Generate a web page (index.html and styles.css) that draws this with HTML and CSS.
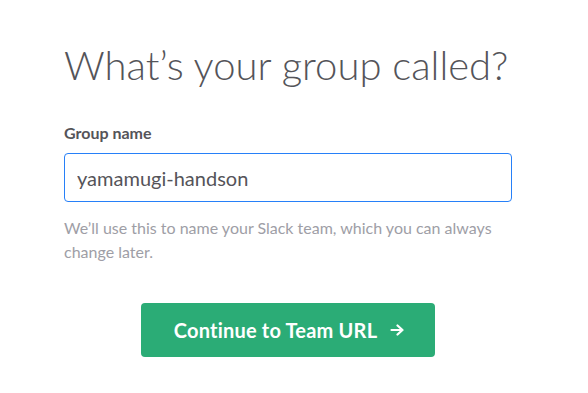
FILE: index.html
```html
<!DOCTYPE html>
<html lang="en">
<head>
    <meta charset="UTF-8">
    <title>What's your group called?</title>
    <link rel="stylesheet" href="styles.css">
</head>
<body>
<!-- group name step -->
<main class="step">
    <h1 class="step-title">What’s your group called?</h1>
    <form class="step-form">
        <label class="field-label" for="group-name">Group name</label>
        <input class="field-input" id="group-name" type="text" value="yamamugi-handson">
        <p class="field-hint">We’ll use this to name your Slack team, which you can always change later.</p>
        <div class="actions">
            <button class="btn-continue" type="button">
                Continue to Team URL
                <svg class="arrow" width="14" height="12" viewBox="0 0 14 12" fill="none" stroke="currentColor" stroke-width="2.2" stroke-linecap="round" stroke-linejoin="round">
                    <path d="M1.5 6h11M7.5 1.5L12.5 6 7.5 10.5"/>
                </svg>
            </button>
        </div>
    </form>
</main>
</body>
</html>
```

FILE: styles.css
```css
/* page */
html, body {
    margin: 0;
    background: #fff;
    font-family: Lato, "Open Sans", sans-serif;
}

body {
    padding-right: 12px;
}

.step {
    width: 448px;
    margin: 0 auto;
    padding-top: 37px;
}

/* heading */
.step-title {
    margin: 0 0 30px;
    font-size: 40px;
    font-weight: 300;
    line-height: 56px;
    color: #545459;
    white-space: nowrap;
}

/* field */
.field-label {
    display: block;
    font-size: 16px;
    font-weight: 700;
    color: #555459;
    margin-bottom: 11px;
}

.field-input {
    box-sizing: border-box;
    width: 100%;
    height: 49px;
    padding: 0 12px;
    border: 1px solid #2780f8;
    border-radius: 4px;
    font-family: inherit;
    font-size: 20px;
    color: #555459;
    outline: none;
}

.field-hint {
    margin: 14px 0 0;
    font-size: 16px;
    line-height: 24px;
    color: #9e9ea6;
}

/* button */
.actions {
    display: flex;
    justify-content: center;
    margin-top: 39px;
}

.btn-continue {
    display: flex;
    align-items: center;
    justify-content: center;
    gap: 13px;
    width: 294px;
    height: 54px;
    padding: 0 0 0 2px;
    border: none;
    border-radius: 4px;
    background: #2bac76;
    color: #fff;
    font-family: inherit;
    font-size: 20px;
    font-weight: 700;
    letter-spacing: 0.2px;
}

.btn-continue .arrow {
    flex: none;
}
```
